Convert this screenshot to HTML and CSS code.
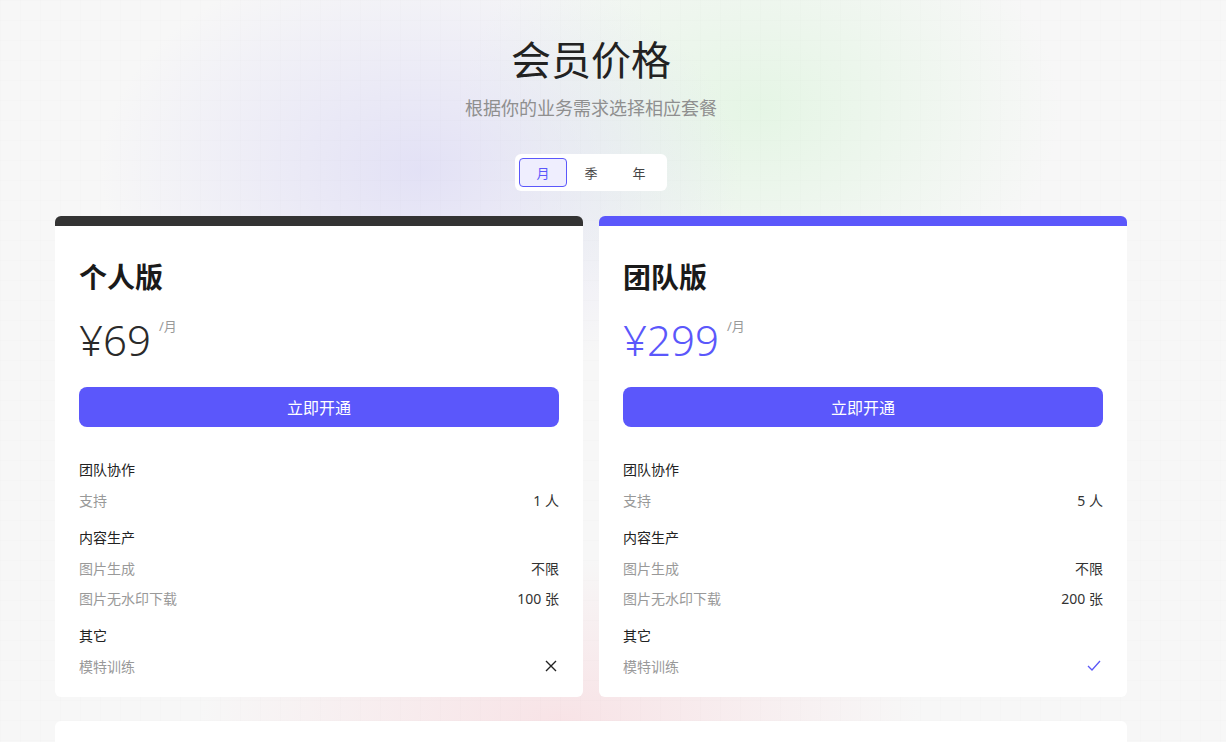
FILE: index.html
```html
<!DOCTYPE html>
<html lang="zh-CN">
<head>
    <meta charset="UTF-8">
    <meta name="viewport" content="width=device-width, initial-scale=1.0">
    <title>会员价格</title>
    <link rel="stylesheet" href="styles.css">
</head>
<body>
    <div class="page">
        <div class="pricing">
            <h1 class="title">会员价格</h1>
            <p class="subtitle">根据你的业务需求选择相应套餐</p>

            <div class="period-tabs">
                <button class="tab active">月</button>
                <button class="tab">季</button>
                <button class="tab">年</button>
            </div>

            <div class="plans">
                <div class="plan plan-personal">
                    <h2 class="plan-name">个人版</h2>
                    <div class="price">
                        <span class="amount">¥69</span>
                        <span class="unit">/月</span>
                    </div>
                    <button class="buy">立即开通</button>
                    <div class="features">
                        <div class="group">
                            <div class="group-title">团队协作</div>
                            <div class="row"><span>支持</span><span class="val">1 人</span></div>
                        </div>
                        <div class="group">
                            <div class="group-title">内容生产</div>
                            <div class="row"><span>图片生成</span><span class="val">不限</span></div>
                            <div class="row"><span>图片无水印下载</span><span class="val">100 张</span></div>
                        </div>
                        <div class="group">
                            <div class="group-title">其它</div>
                            <div class="row">
                                <span>模特训练</span>
                                <svg class="icon" width="12" height="12" viewBox="0 0 12 12"><path d="M1 1L11 11M11 1L1 11" stroke="#222" stroke-width="1.4" fill="none"/></svg>
                            </div>
                        </div>
                    </div>
                </div>

                <div class="plan plan-team">
                    <h2 class="plan-name">团队版</h2>
                    <div class="price">
                        <span class="amount">¥299</span>
                        <span class="unit">/月</span>
                    </div>
                    <button class="buy">立即开通</button>
                    <div class="features">
                        <div class="group">
                            <div class="group-title">团队协作</div>
                            <div class="row"><span>支持</span><span class="val">5 人</span></div>
                        </div>
                        <div class="group">
                            <div class="group-title">内容生产</div>
                            <div class="row"><span>图片生成</span><span class="val">不限</span></div>
                            <div class="row"><span>图片无水印下载</span><span class="val">200 张</span></div>
                        </div>
                        <div class="group">
                            <div class="group-title">其它</div>
                            <div class="row">
                                <span>模特训练</span>
                                <svg class="icon" width="14" height="12" viewBox="0 0 14 12"><path d="M1 6L5 10L13 1" stroke="#5b57f7" stroke-width="1.3" fill="none"/></svg>
                            </div>
                        </div>
                    </div>
                </div>
            </div>

            <div class="more-card"></div>
        </div>
    </div>
</body>
</html>
```

FILE: styles.css
```css
:root {
    --accent: #5b57fb;
    --text: #222222;
    --muted: #999999;
    --page-bg: #f7f7f7;
}

html, body {
    margin: 0;
    padding: 0;
    height: 100%;
    overflow: hidden;
}

body {
    font-family: "Noto Sans", "Noto Sans CJK SC", sans-serif;
    color: var(--text);
    background-color: var(--page-bg);
    background-image:
        radial-gradient(ellipse 320px 220px at 420px 170px, rgba(220, 218, 245, 0.75), rgba(220, 218, 245, 0) 100%),
        radial-gradient(ellipse 300px 220px at 760px 110px, rgba(225, 245, 225, 0.8), rgba(225, 245, 225, 0) 100%),
        radial-gradient(ellipse 360px 160px at 560px 720px, rgba(248, 222, 226, 0.8), rgba(248, 222, 226, 0) 100%);
}

.page {
    min-height: 100vh;
    background-image:
        linear-gradient(rgba(0, 0, 0, 0.007) 1px, transparent 1px),
        linear-gradient(90deg, rgba(0, 0, 0, 0.007) 1px, transparent 1px);
    background-size: 20px 20px;
}

.pricing {
    width: 1072px;
    margin-left: 55px;
    padding-top: 30px;
    display: flex;
    flex-direction: column;
    align-items: center;
}

.title {
    margin: 0;
    font-size: 40px;
    font-weight: 400;
    line-height: 60px;
    color: #222;
}

.subtitle {
    margin: 4px 0 0;
    font-size: 18px;
    line-height: 28px;
    color: #8f8f8f;
}

.period-tabs {
    margin-top: 32px;
    display: flex;
    padding: 4px;
    background: #fff;
    border-radius: 6px;
}

.tab {
    width: 48px;
    height: 29px;
    border: 1px solid transparent;
    border-radius: 4px;
    background: none;
    font-family: inherit;
    font-size: 13px;
    color: #444;
    cursor: pointer;
    padding: 0;
}

.tab.active {
    border-color: var(--accent);
    background: #efeefe;
    color: var(--accent);
}

.plans {
    margin-top: 25px;
    width: 100%;
    display: grid;
    grid-template-columns: 1fr 1fr;
    gap: 16px;
}

.plan {
    background: #fff;
    border-radius: 6px;
    border-top: 10px solid #333;
    padding: 30px 24px 16px;
}

.plan-team {
    border-top-color: var(--accent);
}

.plan-name {
    margin: 0;
    font-size: 28px;
    font-weight: 700;
    line-height: 42px;
    color: #1a1a1a;
}

.price {
    margin-top: 14px;
    display: flex;
    align-items: flex-start;
    gap: 8px;
    height: 56px;
}

.amount {
    font-size: 42px;
    line-height: 56px;
    font-weight: 300;
    color: #2a2a2a;
}

.plan-team .amount {
    color: var(--accent);
}

.unit {
    margin-top: 4px;
    font-size: 13px;
    color: var(--muted);
}

.buy {
    margin-top: 19px;
    width: 100%;
    height: 40px;
    border: none;
    border-radius: 8px;
    background: var(--accent);
    color: #fff;
    font-family: inherit;
    font-size: 16px;
    cursor: pointer;
}

.features {
    margin-top: 28px;
}

.group + .group {
    margin-top: 8px;
}

.group-title {
    font-size: 14px;
    line-height: 30px;
    color: #222;
}

.row {
    display: flex;
    justify-content: space-between;
    align-items: center;
    height: 30px;
    font-size: 14px;
    color: var(--muted);
}

.row .val {
    color: #333;
}

.icon {
    display: block;
    margin-right: 2px;
}

.more-card {
    margin-top: 24px;
    width: 100%;
    height: 80px;
    background: #fff;
    border-radius: 6px;
}
```
